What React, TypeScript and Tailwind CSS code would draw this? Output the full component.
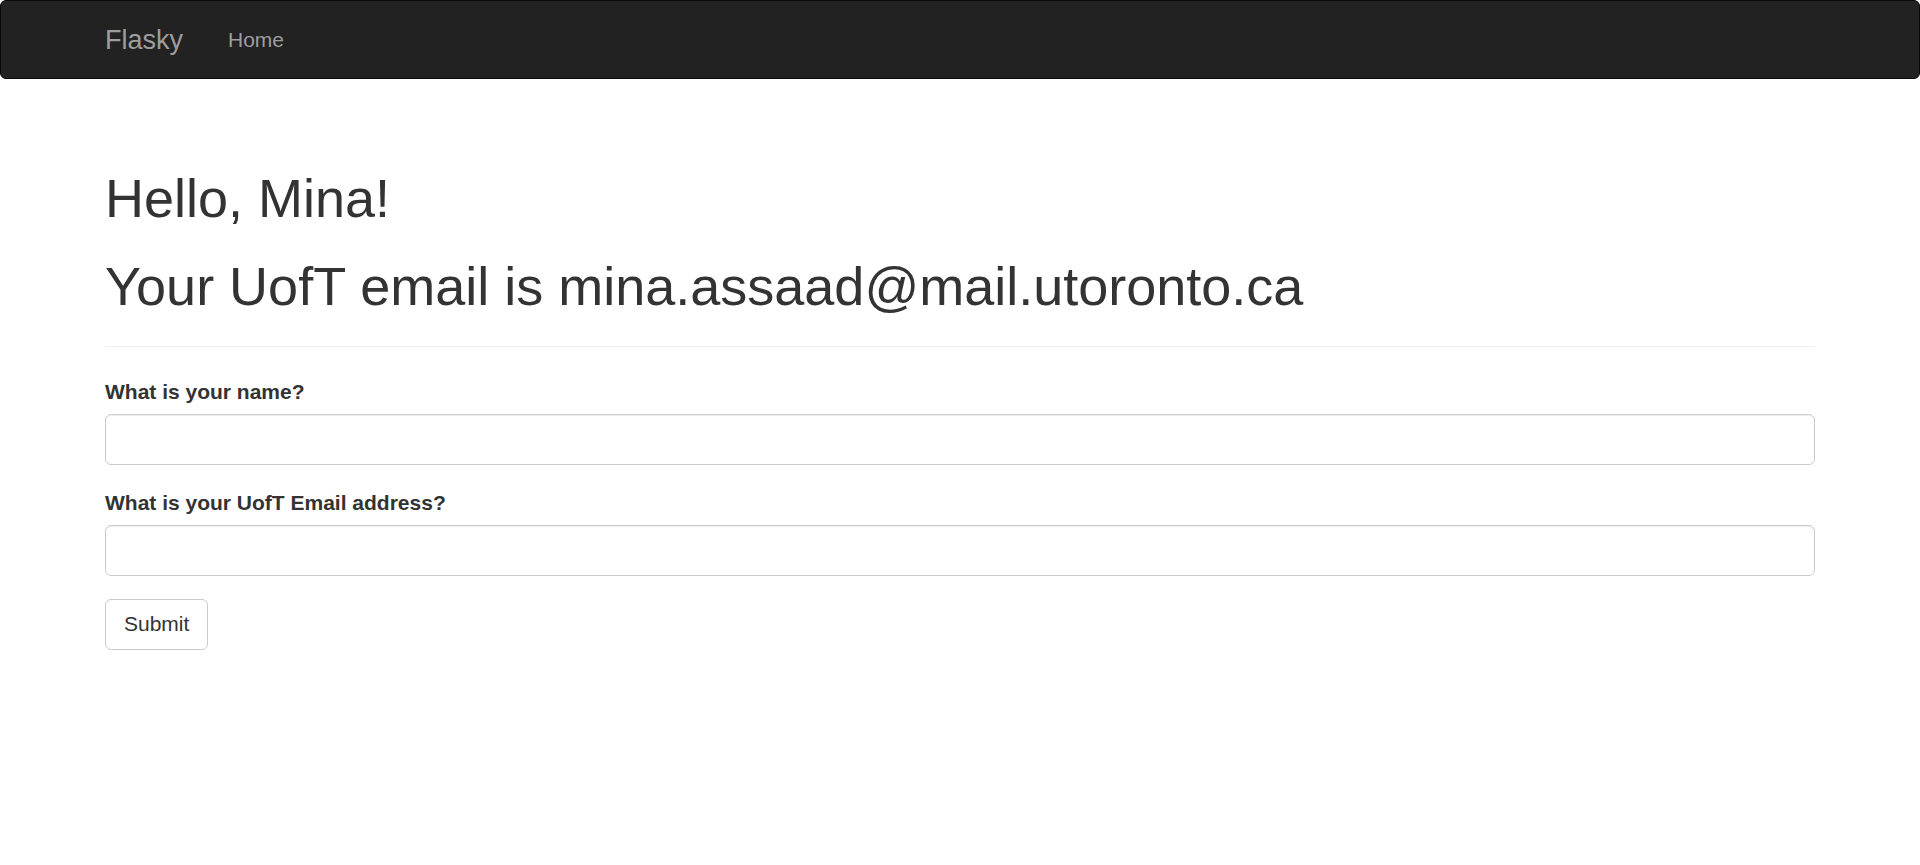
export default function App() {
  return (
    <div className="min-h-screen bg-white text-[#333] font-['Liberation_Sans',Arial,sans-serif]">
      {/* navbar */}
      <nav className="h-[79px] bg-[#222] border border-[#080808] rounded-[6px]">
        <div className="mx-auto w-[1755px] h-full flex items-center">
          <a className="px-[22.5px] text-[27px] leading-[30px] text-[#9d9d9d]">Flasky</a>
          <a className="px-[22.5px] text-[21px] leading-[30px] text-[#9d9d9d] pt-[1px]">Home</a>
        </div>
      </nav>

      <main className="mx-auto w-[1710px]">
        <div className="pt-[90px] border-b border-[#eee] pb-[29px]">
          <h1 className="text-[54px] leading-[59.4px] font-normal">Hello, Mina!</h1>
          <h1 className="mt-[29px] text-[54px] leading-[59.4px] font-normal">
            Your UofT email is mina.assaad@mail.utoronto.ca
          </h1>
        </div>

        <form className="pt-[30px] flex flex-col">
          <div className="mb-[22.5px]">
            <label className="block mb-[7.5px] text-[21px] leading-[30px] font-bold">What is your name?</label>
            <input
              type="text"
              className="block w-full h-[51px] border border-[#ccc] rounded-[6px] px-[18px] text-[21px] shadow-[inset_0_1px_1px_rgba(0,0,0,0.075)] outline-none"
            />
          </div>
          <div className="mb-[22.5px]">
            <label className="block mb-[7.5px] text-[21px] leading-[30px] font-bold">
              What is your UofT Email address?
            </label>
            <input
              type="text"
              className="block w-full h-[51px] border border-[#ccc] rounded-[6px] px-[18px] text-[21px] shadow-[inset_0_1px_1px_rgba(0,0,0,0.075)] outline-none"
            />
          </div>
          <div>
            <button
              type="button"
              className="h-[51px] px-[18px] border border-[#ccc] rounded-[6px] bg-white text-[21px] leading-[30px] text-[#333]"
            >
              Submit
            </button>
          </div>
        </form>
      </main>
    </div>
  )
}
